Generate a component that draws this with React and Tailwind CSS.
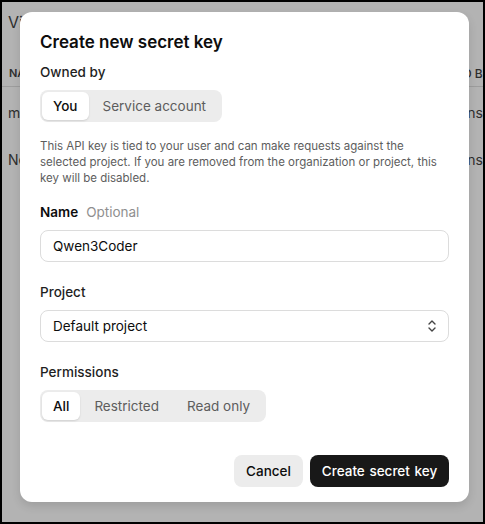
import React from "react";

function Seg({ items, active }) {
  return (
    <div className="inline-flex h-8 items-center rounded-lg bg-[#ececec] p-[2px]">
      {items.map((it, i) => (
        <div
          key={it}
          className={
            i === active
              ? "flex h-[28px] items-center rounded-md bg-white px-[11px] text-[13.5px] font-medium text-[#0d0d0d] shadow-[0_1px_2px_rgba(0,0,0,0.12)]"
              : "flex h-[28px] items-center px-[14px] text-[13.5px] text-[#5d5d5d]"
          }
        >
          {it}
        </div>
      ))}
    </div>
  );
}

export default function App() {
  return (
    <div
      className="relative h-[524px] w-[485px] overflow-hidden border-2 border-black bg-[#b3b3b3]"
      style={{ fontFamily: "Inter, 'Noto Sans', sans-serif" }}
    >
      {/* background page */}
      <div className="flex flex-col text-[#2e2e2e]">
        <div className="pl-[6px] pt-[10px] text-[16px] leading-5">View</div>
        <div className="mt-[29px] flex h-[26px] items-center justify-between border-b border-[#9d9d9d] pl-[7px] text-[11px] font-semibold">
          <span>NAME</span>
          <span className="-mr-[8px] text-[12px] font-medium">CREATED BY</span>
        </div>
        <div className="flex h-[47px] items-center justify-between pl-[6px] pt-[4px] text-[14px]">
          <span>my key</span>
          <span>Permissions</span>
        </div>
        <div className="flex h-[47px] items-center justify-between pl-[6px] pt-[4px] text-[14px]">
          <span>New key</span>
          <span>Permissions</span>
        </div>
      </div>

      {/* modal */}
      <div className="absolute left-[18px] top-[10px] w-[449px] rounded-xl bg-white px-5 pb-[15px] pt-[18px] shadow-[0_4px_10px_rgba(0,0,0,0.12)]">
        <div className="text-[17px] font-semibold leading-6 text-[#0d0d0d]">Create new secret key</div>
        <div className="mt-2 text-[13.5px] font-medium leading-5 text-[#1f1f1f]">Owned by</div>
        <div className="mt-2">
          <Seg items={["You", "Service account"]} active={0} />
        </div>
        <p className="mt-4 text-[11.5px] leading-4 text-[#5d5d5d]">
          This API key is tied to your user and can make requests against the selected project. If you are removed from the organization or project, this key will be disabled.
        </p>
        <div className="mt-4 flex items-baseline gap-2 text-[13.5px] leading-5">
          <span className="font-semibold text-[#0d0d0d]">Name</span>
          <span className="text-[#8f8f8f]">Optional</span>
        </div>
        <div className="mt-2 flex h-8 items-center rounded-lg border border-[#dcdcdc] px-3 text-[13.5px] text-[#0d0d0d]">
          Qwen3Coder
        </div>
        <div className="mt-5 text-[13.5px] font-medium leading-5 text-[#1f1f1f]">Project</div>
        <div className="mt-2 flex h-8 items-center justify-between rounded-lg border border-[#dcdcdc] pl-3 pr-[10px] text-[13.5px] text-[#0d0d0d]">
          <span>Default project</span>
          <svg width="12" height="14" viewBox="0 0 12 14" fill="none" stroke="#444" strokeWidth="1.4" strokeLinecap="round" strokeLinejoin="round">
            <path d="M3 5l3-3 3 3" />
            <path d="M3 9l3 3 3-3" />
          </svg>
        </div>
        <div className="mt-5 text-[13.5px] font-medium leading-5 text-[#1f1f1f]">Permissions</div>
        <div className="mt-2">
          <Seg items={["All", "Restricted", "Read only"]} active={0} />
        </div>
        <div className="mt-[33px] flex justify-end gap-[7px]">
          <button className="flex h-8 w-[69px] items-center justify-center rounded-lg bg-[#ececec] text-[13.5px] font-medium text-[#0d0d0d]">Cancel</button>
          <button className="flex h-8 w-[139px] items-center justify-center rounded-lg bg-[#181818] text-[13.5px] font-medium text-white [word-spacing:1px]">Create secret key</button>
        </div>
      </div>
    </div>
  );
}
